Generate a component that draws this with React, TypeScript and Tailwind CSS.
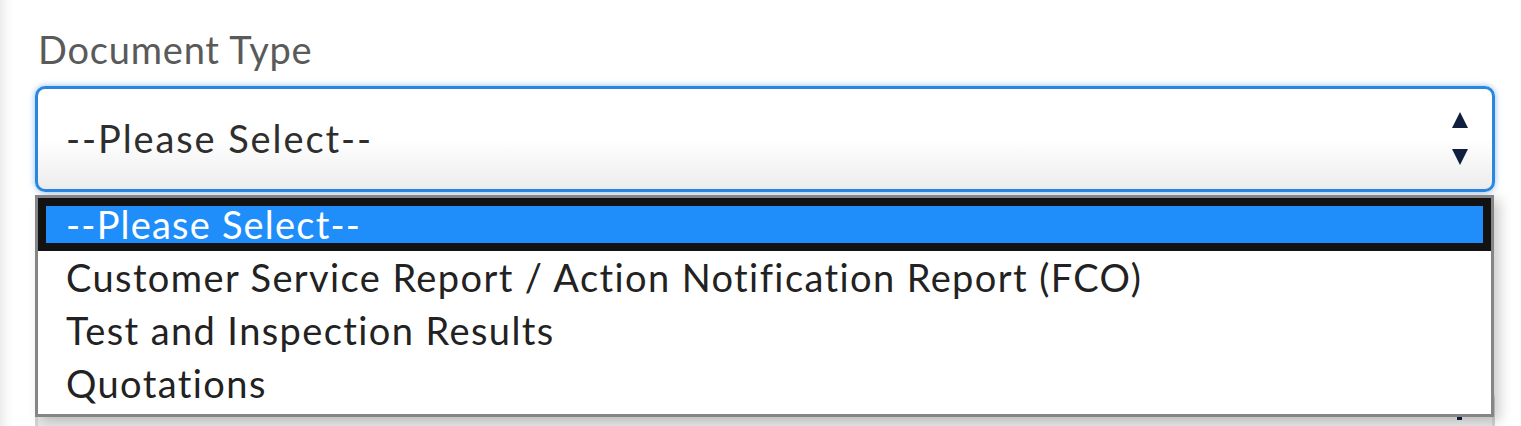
import React from "react";

const options = [
  "--Please Select--",
  "Customer Service Report / Action Notification Report (FCO)",
  "Test and Inspection Results",
  "Quotations",
];

function Arrows() {
  return (
    <svg width="20" height="54" viewBox="0 0 20 54" className="shrink-0">
      <path d="M10 0 L18 16 L2 16 Z" fill="#0f1f3d" />
      <path d="M2 37 L18 37 L10 53 Z" fill="#0f1f3d" />
    </svg>
  );
}

export default function App() {
  return (
    <div className="relative h-[426px] w-[1521px] overflow-hidden bg-white font-['Lato',sans-serif] text-[38px] shadow-[inset_16px_0_14px_-14px_rgba(0,0,0,0.12)]">
      <div className="pl-[35px] pr-[26px] pt-[27px]">
        <label className="block pl-[3px] leading-[1.2] tracking-[0.8px] text-[#5a5a5a]">Document Type</label>
        <div className="mt-[13px] flex h-[106px] items-center justify-between rounded-[10px] border-[3px] border-[#2b86e2] bg-gradient-to-b from-white via-white to-[#ececec] pl-[28px] pr-[22px] shadow-[0_0_6px_rgba(43,134,226,0.55)]">
          <span className="leading-[1.2] tracking-[1.9px] text-[#2e2e2e]">--Please Select--</span>
          <Arrows />
        </div>

        {/* next field, hidden behind the open list */}
        <div className="mt-[196px] flex h-[106px] justify-end rounded-[10px] border-[3px] border-[#d4d4d4] bg-gradient-to-b from-[#e4e4e4] to-[#efefef] pr-[30px] pt-[25px]">
          <span className="block h-[4px] w-[5px] bg-[#0f1f3d]" />
        </div>
      </div>

      {/* open listbox of the select */}
      <ul className="absolute left-[35px] top-[195px] w-[1459px] border-[3px] border-[#858585] bg-white pb-[4px] shadow-[6px_4px_12px_rgba(0,0,0,0.2)]">
        {options.map((o, i) => (
          <li
            key={o}
            className={
              i === 0
                ? "h-[53px] bg-[#1f8efb] pl-[28px] leading-[53px] tracking-[1.2px] text-white shadow-[inset_0_0_0_8px_#121212]"
                : "h-[53px] pl-[28px] leading-[53px] tracking-[1.4px] text-[#222]"
            }
          >
            {o}
          </li>
        ))}
      </ul>
    </div>
  );
}
